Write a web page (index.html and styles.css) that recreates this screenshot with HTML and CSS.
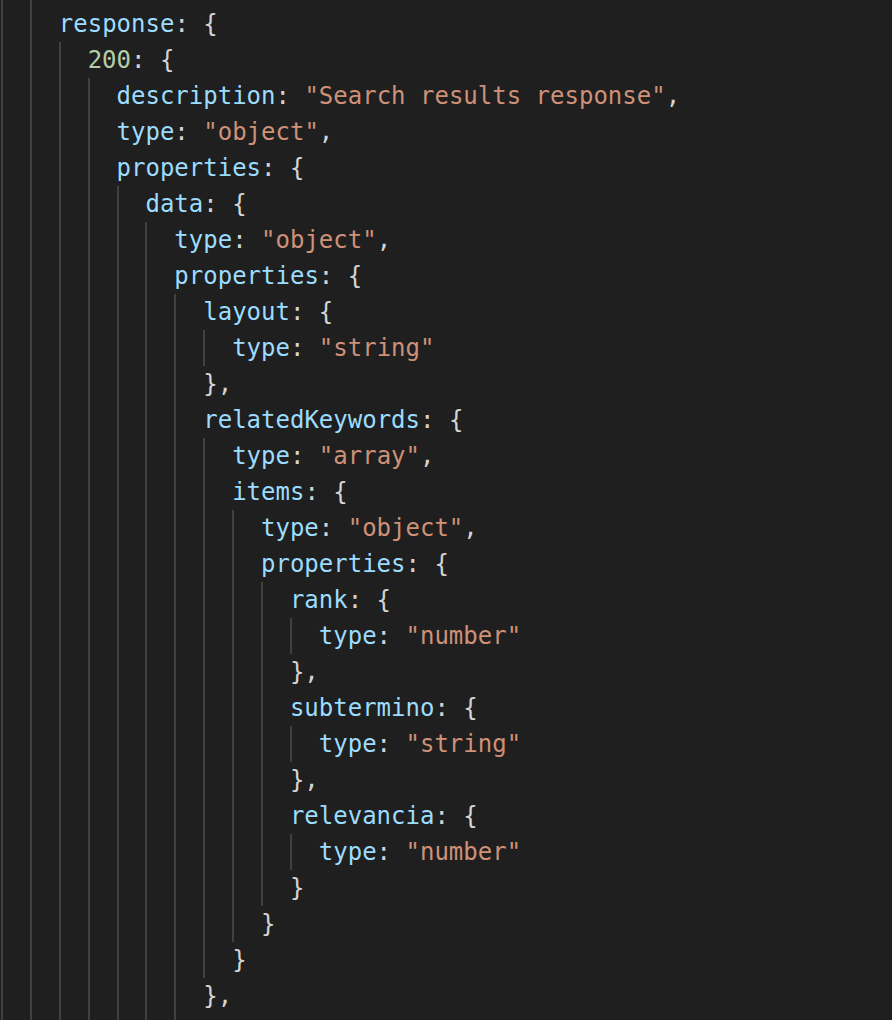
FILE: index.html
```html
<!DOCTYPE html>
<html>
<head>
<meta charset="utf-8">
<link rel="stylesheet" href="styles.css">
</head>
<body>
<div class="editor">
  <div class="line"><span class="ind"></span><span class="ind"></span></div>
  <div class="line"><span class="ind"></span><span class="ind"></span><span class="code"><span class="k">response</span><span class="p">: {</span></span></div>
  <div class="line"><span class="ind"></span><span class="ind"></span><span class="ind"></span><span class="code"><span class="n">200</span><span class="p">: {</span></span></div>
  <div class="line"><span class="ind"></span><span class="ind"></span><span class="ind"></span><span class="ind"></span><span class="code"><span class="k">description</span><span class="p">: </span><span class="s">"Search results response"</span><span class="p">,</span></span></div>
  <div class="line"><span class="ind"></span><span class="ind"></span><span class="ind"></span><span class="ind"></span><span class="code"><span class="k">type</span><span class="p">: </span><span class="s">"object"</span><span class="p">,</span></span></div>
  <div class="line"><span class="ind"></span><span class="ind"></span><span class="ind"></span><span class="ind"></span><span class="code"><span class="k">properties</span><span class="p">: {</span></span></div>
  <div class="line"><span class="ind"></span><span class="ind"></span><span class="ind"></span><span class="ind"></span><span class="ind"></span><span class="code"><span class="k">data</span><span class="p">: {</span></span></div>
  <div class="line"><span class="ind"></span><span class="ind"></span><span class="ind"></span><span class="ind"></span><span class="ind"></span><span class="ind"></span><span class="code"><span class="k">type</span><span class="p">: </span><span class="s">"object"</span><span class="p">,</span></span></div>
  <div class="line"><span class="ind"></span><span class="ind"></span><span class="ind"></span><span class="ind"></span><span class="ind"></span><span class="ind"></span><span class="code"><span class="k">properties</span><span class="p">: {</span></span></div>
  <div class="line"><span class="ind"></span><span class="ind"></span><span class="ind"></span><span class="ind"></span><span class="ind"></span><span class="ind"></span><span class="ind"></span><span class="code"><span class="k">layout</span><span class="p">: {</span></span></div>
  <div class="line"><span class="ind"></span><span class="ind"></span><span class="ind"></span><span class="ind"></span><span class="ind"></span><span class="ind"></span><span class="ind"></span><span class="ind"></span><span class="code"><span class="k">type</span><span class="p">: </span><span class="s">"string"</span></span></div>
  <div class="line"><span class="ind"></span><span class="ind"></span><span class="ind"></span><span class="ind"></span><span class="ind"></span><span class="ind"></span><span class="ind"></span><span class="code"><span class="p">},</span></span></div>
  <div class="line"><span class="ind"></span><span class="ind"></span><span class="ind"></span><span class="ind"></span><span class="ind"></span><span class="ind"></span><span class="ind"></span><span class="code"><span class="k">relatedKeywords</span><span class="p">: {</span></span></div>
  <div class="line"><span class="ind"></span><span class="ind"></span><span class="ind"></span><span class="ind"></span><span class="ind"></span><span class="ind"></span><span class="ind"></span><span class="ind"></span><span class="code"><span class="k">type</span><span class="p">: </span><span class="s">"array"</span><span class="p">,</span></span></div>
  <div class="line"><span class="ind"></span><span class="ind"></span><span class="ind"></span><span class="ind"></span><span class="ind"></span><span class="ind"></span><span class="ind"></span><span class="ind"></span><span class="code"><span class="k">items</span><span class="p">: {</span></span></div>
  <div class="line"><span class="ind"></span><span class="ind"></span><span class="ind"></span><span class="ind"></span><span class="ind"></span><span class="ind"></span><span class="ind"></span><span class="ind"></span><span class="ind"></span><span class="code"><span class="k">type</span><span class="p">: </span><span class="s">"object"</span><span class="p">,</span></span></div>
  <div class="line"><span class="ind"></span><span class="ind"></span><span class="ind"></span><span class="ind"></span><span class="ind"></span><span class="ind"></span><span class="ind"></span><span class="ind"></span><span class="ind"></span><span class="code"><span class="k">properties</span><span class="p">: {</span></span></div>
  <div class="line"><span class="ind"></span><span class="ind"></span><span class="ind"></span><span class="ind"></span><span class="ind"></span><span class="ind"></span><span class="ind"></span><span class="ind"></span><span class="ind"></span><span class="ind"></span><span class="code"><span class="k">rank</span><span class="p">: {</span></span></div>
  <div class="line"><span class="ind"></span><span class="ind"></span><span class="ind"></span><span class="ind"></span><span class="ind"></span><span class="ind"></span><span class="ind"></span><span class="ind"></span><span class="ind"></span><span class="ind"></span><span class="ind"></span><span class="code"><span class="k">type</span><span class="p">: </span><span class="s">"number"</span></span></div>
  <div class="line"><span class="ind"></span><span class="ind"></span><span class="ind"></span><span class="ind"></span><span class="ind"></span><span class="ind"></span><span class="ind"></span><span class="ind"></span><span class="ind"></span><span class="ind"></span><span class="code"><span class="p">},</span></span></div>
  <div class="line"><span class="ind"></span><span class="ind"></span><span class="ind"></span><span class="ind"></span><span class="ind"></span><span class="ind"></span><span class="ind"></span><span class="ind"></span><span class="ind"></span><span class="ind"></span><span class="code"><span class="k">subtermino</span><span class="p">: {</span></span></div>
  <div class="line"><span class="ind"></span><span class="ind"></span><span class="ind"></span><span class="ind"></span><span class="ind"></span><span class="ind"></span><span class="ind"></span><span class="ind"></span><span class="ind"></span><span class="ind"></span><span class="ind"></span><span class="code"><span class="k">type</span><span class="p">: </span><span class="s">"string"</span></span></div>
  <div class="line"><span class="ind"></span><span class="ind"></span><span class="ind"></span><span class="ind"></span><span class="ind"></span><span class="ind"></span><span class="ind"></span><span class="ind"></span><span class="ind"></span><span class="ind"></span><span class="code"><span class="p">},</span></span></div>
  <div class="line"><span class="ind"></span><span class="ind"></span><span class="ind"></span><span class="ind"></span><span class="ind"></span><span class="ind"></span><span class="ind"></span><span class="ind"></span><span class="ind"></span><span class="ind"></span><span class="code"><span class="k">relevancia</span><span class="p">: {</span></span></div>
  <div class="line"><span class="ind"></span><span class="ind"></span><span class="ind"></span><span class="ind"></span><span class="ind"></span><span class="ind"></span><span class="ind"></span><span class="ind"></span><span class="ind"></span><span class="ind"></span><span class="ind"></span><span class="code"><span class="k">type</span><span class="p">: </span><span class="s">"number"</span></span></div>
  <div class="line"><span class="ind"></span><span class="ind"></span><span class="ind"></span><span class="ind"></span><span class="ind"></span><span class="ind"></span><span class="ind"></span><span class="ind"></span><span class="ind"></span><span class="ind"></span><span class="code"><span class="p">}</span></span></div>
  <div class="line"><span class="ind"></span><span class="ind"></span><span class="ind"></span><span class="ind"></span><span class="ind"></span><span class="ind"></span><span class="ind"></span><span class="ind"></span><span class="ind"></span><span class="code"><span class="p">}</span></span></div>
  <div class="line"><span class="ind"></span><span class="ind"></span><span class="ind"></span><span class="ind"></span><span class="ind"></span><span class="ind"></span><span class="ind"></span><span class="ind"></span><span class="code"><span class="p">}</span></span></div>
  <div class="line"><span class="ind"></span><span class="ind"></span><span class="ind"></span><span class="ind"></span><span class="ind"></span><span class="ind"></span><span class="ind"></span><span class="code"><span class="p">},</span></span></div>
  <div class="line"><span class="ind"></span><span class="ind"></span><span class="ind"></span><span class="ind"></span><span class="ind"></span><span class="ind"></span><span class="ind"></span></div>
</div>
</body>
</html>
```
FILE: styles.css
```css
html, body {
  margin: 0;
  padding: 0;
  background: #1f1f1f;
  height: 1020px;
  overflow: hidden;
}

.editor {
  margin-top: -30px;
  padding-left: 1px;
  font-family: "DejaVu Sans Mono", "Liberation Mono", monospace;
  font-size: 24px;
  color: #d4d4d4;
}

.line {
  display: flex;
  height: 36px;
  line-height: 36px;
  white-space: pre;
}

.ind {
  flex: none;
  width: 2ch;
  height: 36px;
  border-left: 2px solid #404040;
  box-sizing: border-box;
}

.code {
  flex: none;
}

.k { color: #9cdcfe; }
.s { color: #ce9178; }
.n { color: #b5cea8; }
.p { color: #d4d4d4; }
```
